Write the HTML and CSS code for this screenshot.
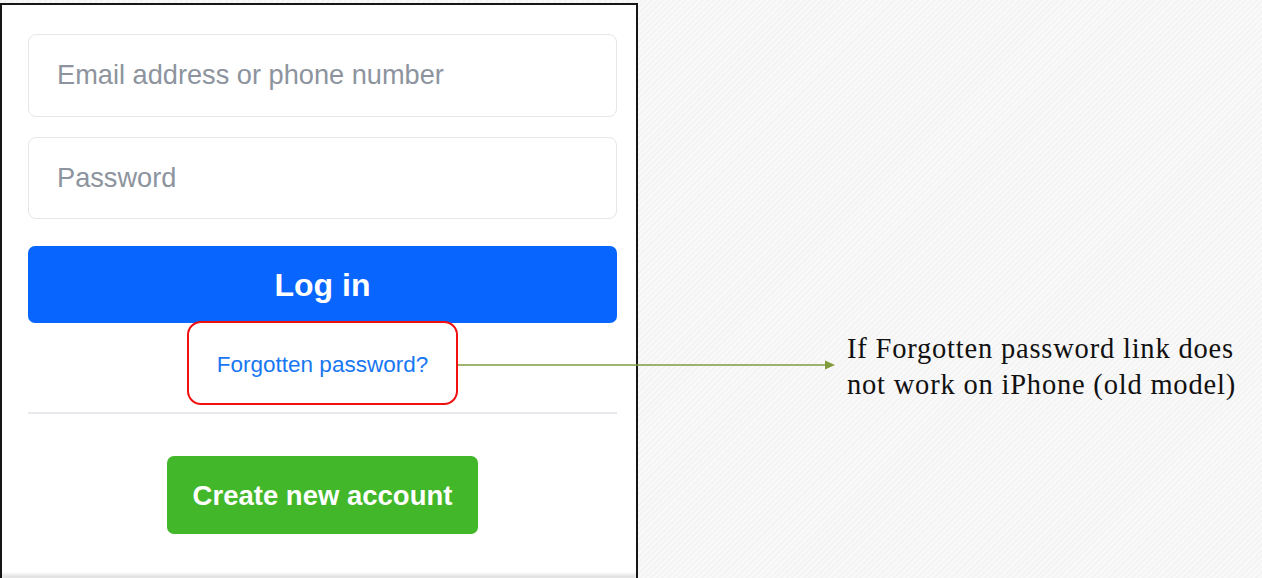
FILE: index.html
```html
<!DOCTYPE html>
<html lang="en">
<head>
<meta charset="utf-8">
<title>Login annotation</title>
<link rel="stylesheet" href="styles.css">
</head>
<body>
<div class="stage">
  <div class="shot">
    <div class="card">
      <div class="field">Email address or phone number</div>
      <div class="field field-pw">Password</div>
      <div class="btn-login">Log in</div>
      <div class="highlight"><span class="link">Forgotten password?</span></div>
      <div class="divider"></div>
      <div class="btn-create">Create new account</div>
    </div>
  </div>
  <div class="note">
    <p class="note-text">If Forgotten password link does<br>not work on iPhone (old model)</p>
  </div>
  <svg class="arrow" width="380" height="12" viewBox="0 0 380 12">
    <line x1="0" y1="6" x2="370" y2="6" stroke="#7f9b3c" stroke-width="1.5"/>
    <polygon points="367,1.5 377,6 367,10.5" fill="#7f9b3c"/>
  </svg>
</div>
</body>
</html>
```

FILE: styles.css
```css
html, body {
  margin: 0;
  padding: 0;
}
body {
  width: 1262px;
  height: 578px;
  overflow: hidden;
  font-family: "Liberation Sans", Arial, sans-serif;
  background: #f5f5f5;
}
.stage {
  position: relative;
  display: flex;
  width: 1262px;
  height: 578px;
  background:
    repeating-linear-gradient(135deg, rgba(0,0,0,0.012) 0 2px, rgba(255,255,255,0.25) 2px 4px),
    #f7f7f7;
}
.shot {
  box-sizing: border-box;
  width: 638px;
  height: 575px;
  margin-top: 3px;
  border: 2px solid #161616;
  border-bottom: none;
  background: #ffffff;
  display: flex;
}
.card {
  flex: 1;
  display: flex;
  flex-direction: column;
  align-items: center;
  padding: 29px 19px 0 26px;
  border-radius: 8px 0 0 0;
  box-shadow: 0 3px 3px rgba(0,0,0,0.12), inset 0 -4px 3px -2px rgba(0,0,0,0.10);
  margin-bottom: 2px;
}
.field {
  box-sizing: border-box;
  align-self: stretch;
  height: 83px;
  border: 1.5px solid #e4e6ea;
  border-radius: 8px;
  padding-left: 28px;
  padding-bottom: 1px;
  display: flex;
  align-items: center;
  font-size: 27.2px;
  color: #8d949e;
}
.field-pw {
  margin-top: 20px;
  height: 82px;
}
.btn-login {
  align-self: stretch;
  margin-top: 27px;
  height: 77px;
  border-radius: 7px;
  background: #0866ff;
  color: #ffffff;
  font-weight: bold;
  font-size: 32px;
  padding-top: 2px;
  box-sizing: border-box;
  display: flex;
  align-items: center;
  justify-content: center;
}
.highlight {
  box-sizing: border-box;
  margin-top: -2px;
  width: 271px;
  height: 84px;
  padding-top: 3px;
  border: 2px solid #f01010;
  border-radius: 14px;
  display: flex;
  align-items: center;
  justify-content: center;
}
.link {
  font-size: 22.5px;
  color: #1877f2;
}
.divider {
  align-self: stretch;
  margin-top: 7px;
  height: 2px;
  background: #e8e9ec;
}
.btn-create {
  box-sizing: border-box;
  margin-top: 42px;
  width: 311px;
  height: 78px;
  padding-top: 2px;
  border-radius: 7px;
  background: #42b72a;
  color: #ffffff;
  font-weight: bold;
  font-size: 27.5px;
  display: flex;
  align-items: center;
  justify-content: center;
}
.note {
  flex: 1;
  padding: 331px 0 0 209px;
}
.note-text {
  margin: 0;
  font-family: "Liberation Serif", "Times New Roman", serif;
  font-size: 28.5px;
  letter-spacing: 0.8px;
  line-height: 36px;
  color: #111111;
  white-space: nowrap;
}
.arrow {
  position: absolute;
  left: 458px;
  top: 359px;
}
```
